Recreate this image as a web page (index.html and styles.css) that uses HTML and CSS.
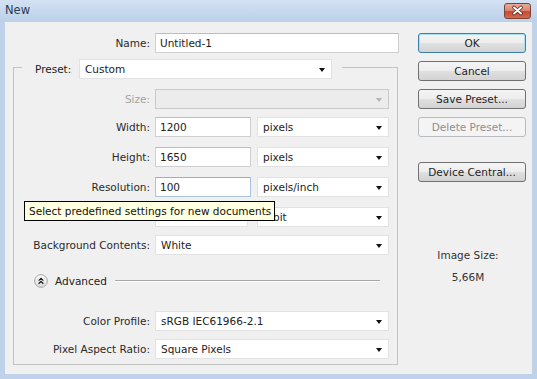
FILE: index.html
```html
<!DOCTYPE html>
<html lang="en">
<head>
    <meta charset="UTF-8">
    <title>New</title>
    <link rel="stylesheet" href="styles.css">
</head>
<body>
    <div class="window">
        <div class="titlebar">
            <span class="title">New</span>
            <div class="close-btn">
                <svg width="27" height="16" viewBox="0 0 27 16">
                    <path d="M10 4.5 L17 10.5 M17 4.5 L10 10.5" stroke="#5a2a22" stroke-width="3.6" stroke-linecap="round"/>
                    <path d="M10 4.5 L17 10.5 M17 4.5 L10 10.5" stroke="#fff" stroke-width="2" stroke-linecap="round"/>
                </svg>
            </div>
        </div>
        <div class="content">
            <div class="form">
                <div class="row name-row">
                    <label class="label name-label">Name:</label>
                    <input class="text-input name-input" type="text" value="Untitled-1">
                </div>

                <fieldset class="group">
                    <legend class="group-legend">
                        <span class="legend-inner">
                            <label class="legend-label">Preset:</label>
                            <div class="dropdown preset-select"><span>Custom</span><i class="arrow"></i></div>
                        </span>
                    </legend>

                    <div class="row">
                        <label class="label disabled">Size:</label>
                        <div class="dropdown wide disabled"><span></span><i class="arrow"></i></div>
                    </div>
                    <div class="row gap-8">
                        <label class="label">Width:</label>
                        <input class="text-input short" type="text" value="1200">
                        <div class="dropdown unit"><span>pixels</span><i class="arrow"></i></div>
                    </div>
                    <div class="row gap-10">
                        <label class="label">Height:</label>
                        <input class="text-input short" type="text" value="1650">
                        <div class="dropdown unit"><span>pixels</span><i class="arrow"></i></div>
                    </div>
                    <div class="row gap-10">
                        <label class="label">Resolution:</label>
                        <input class="text-input short focused" type="text" value="100">
                        <div class="dropdown unit"><span>pixels/inch</span><i class="arrow"></i></div>
                    </div>
                    <div class="row gap-10">
                        <label class="label">Color Mode:</label>
                        <div class="dropdown mode"><span>RGB Color</span><i class="arrow"></i></div>
                        <div class="dropdown unit"><span>8 bit</span><i class="arrow"></i></div>
                    </div>
                    <div class="row gap-8">
                        <label class="label">Background Contents:</label>
                        <div class="dropdown wide"><span>White</span><i class="arrow"></i></div>
                    </div>

                    <div class="advanced">
                        <svg class="advanced-icon" width="14" height="14" viewBox="0 0 14 14">
                            <defs>
                                <linearGradient id="knob" x1="0" y1="0" x2="0" y2="1">
                                    <stop offset="0" stop-color="#ffffff"/>
                                    <stop offset="1" stop-color="#dcdcdc"/>
                                </linearGradient>
                            </defs>
                            <circle cx="7" cy="7" r="6.3" fill="url(#knob)" stroke="#a3a3a3"/>
                            <path d="M4.6 6.6 L7 4.3 L9.4 6.6 M4.6 9.8 L7 7.5 L9.4 9.8" fill="none" stroke="#222" stroke-width="1.3"/>
                        </svg>
                        <span class="advanced-label">Advanced</span>
                        <span class="advanced-line"></span>
                    </div>

                    <div class="row gap-20">
                        <label class="label">Color Profile:</label>
                        <div class="dropdown wide"><span>sRGB IEC61966-2.1</span><i class="arrow"></i></div>
                    </div>
                    <div class="row gap-8">
                        <label class="label">Pixel Aspect Ratio:</label>
                        <div class="dropdown wide"><span>Square Pixels</span><i class="arrow"></i></div>
                    </div>
                </fieldset>
            </div>

            <div class="side">
                <button class="btn default">OK</button>
                <button class="btn">Cancel</button>
                <button class="btn">Save Preset...</button>
                <button class="btn" disabled>Delete Preset...</button>
                <button class="btn device">Device Central...</button>
                <div class="image-size">Image Size:</div>
                <div class="image-size-value">5,66M</div>
            </div>
        </div>

        <div class="tooltip">Select predefined settings for new documents</div>
    </div>
</body>
</html>
```

FILE: styles.css
```css
body {
    margin: 0;
    font-family: "DejaVu Sans", sans-serif;
    font-size: 10.5px;
    color: #222;
}
.window {
    position: relative;
    width: 537px;
    height: 379px;
    background: #bfd2ea;
    display: flex;
    flex-direction: column;
    overflow: hidden;
}
.titlebar {
    height: 22px;
    display: flex;
    align-items: flex-start;
    justify-content: space-between;
    padding: 0 6px 0 5px;
    background: linear-gradient(#d3e2f3, #bcd0e9);
}
.title {
    font-size: 11.5px;
    color: #2a3d55;
    margin-top: 3px;
}
.close-btn {
    width: 27px;
    height: 16px;
    margin-top: 3px;
    border: 1px solid #7a4338;
    border-radius: 3px;
    background: linear-gradient(#e9ab98, #d88a74 45%, #c7492f 55%, #d66b4f);
    box-sizing: border-box;
}
.close-btn svg {
    display: block;
    margin: -1px 0 0 -1px;
}
.content {
    flex: 1;
    margin: 0 5px 5px 5px;
    background: #f0f0f0;
    display: flex;
    padding: 11px 6px 0 0;
}
.form {
    width: 394px;
}
.row {
    display: flex;
    align-items: center;
    height: 20px;
}
.gap-8 {
    margin-top: 8px;
}
.gap-10 {
    margin-top: 10px;
}
.gap-20 {
    margin-top: 20px;
}
.label {
    width: 136px;
    margin-right: 5px;
    text-align: right;
    color: #2a2a2a;
}
.label.disabled {
    color: #a3a3a3;
}
.name-label {
    width: 145px;
}
.text-input {
    height: 20px;
    box-sizing: border-box;
    border: 1px solid #cfcfcf;
    border-top-color: #bdbdbd;
    background: #fff;
    padding: 0 4px;
    font: inherit;
    color: #222;
}
.name-input {
    width: 244px;
}
.short {
    width: 96px;
    margin-right: 6px;
}
.focused {
    border-color: #a9c4de;
    border-top-color: #8fb0d0;
}
.dropdown {
    position: relative;
    height: 20px;
    box-sizing: border-box;
    border: 1px solid #e2e2e2;
    background: #fff;
    padding-left: 5px;
    display: flex;
    align-items: center;
}
.dropdown.disabled {
    background: #ececec;
    border-color: #c9c9c9;
}
.wide {
    width: 234px;
}
.unit {
    width: 132px;
}
.mode {
    width: 93px;
    margin-right: 9px;
}
.preset-select {
    width: 253px;
}
.arrow {
    position: absolute;
    right: 6px;
    top: 8px;
    width: 0;
    height: 0;
    border-left: 3.5px solid transparent;
    border-right: 3.5px solid transparent;
    border-top: 4px solid #111;
}
.disabled .arrow {
    border-top-color: #b5b5b5;
}
.group {
    margin: 2px 0 0 8px;
    width: 385px;
    box-sizing: border-box;
    border: 1px solid #c3c3c3;
    padding: 10px 0 5px 0;
    min-inline-size: 0;
}
.group-legend {
    margin-left: 8px;
    padding: 0 10px 0 13px;
}
.legend-inner {
    display: flex;
    align-items: center;
    padding-top: 4px;
}
.legend-label {
    width: 40px;
    margin-right: 4px;
}
.advanced {
    display: flex;
    align-items: center;
    height: 20px;
    margin-top: 16px;
    padding-left: 20px;
}
.advanced-icon {
    display: block;
}
.advanced-label {
    margin-left: 7px;
}
.advanced-line {
    margin-left: 8px;
    width: 265px;
    border-top: 1px solid #a8a8a8;
    border-bottom: 1px solid #fff;
}
.side {
    width: 108px;
    margin-left: auto;
    display: flex;
    flex-direction: column;
}
.btn {
    width: 108px;
    height: 20px;
    margin-bottom: 8px;
    border: 1px solid #707070;
    border-radius: 3px;
    background: linear-gradient(#f4f4f4, #ededed 50%, #e0e0e0 51%, #d3d3d3);
    font: inherit;
    color: #1e1e1e;
    padding: 0;
}
.btn.default {
    border-color: #3c7fb1;
    box-shadow: inset 0 0 0 1px #a6e1f7;
}
.btn:disabled {
    border-color: #b8bcbf;
    background: #f4f4f4;
    color: #8f8f8f;
}
.btn.device {
    margin-top: 17px;
}
.image-size {
    margin-top: 59px;
    padding-right: 8px;
    text-align: center;
    color: #333;
}
.image-size-value {
    margin-top: 10px;
    padding-right: 8px;
    text-align: center;
    color: #333;
}
.tooltip {
    position: absolute;
    left: 24px;
    top: 201px;
    width: 251px;
    height: 20px;
    box-sizing: border-box;
    border: 1px solid #000;
    background: #ffffe1;
    padding-left: 4px;
    line-height: 18px;
    color: #111;
}
```
